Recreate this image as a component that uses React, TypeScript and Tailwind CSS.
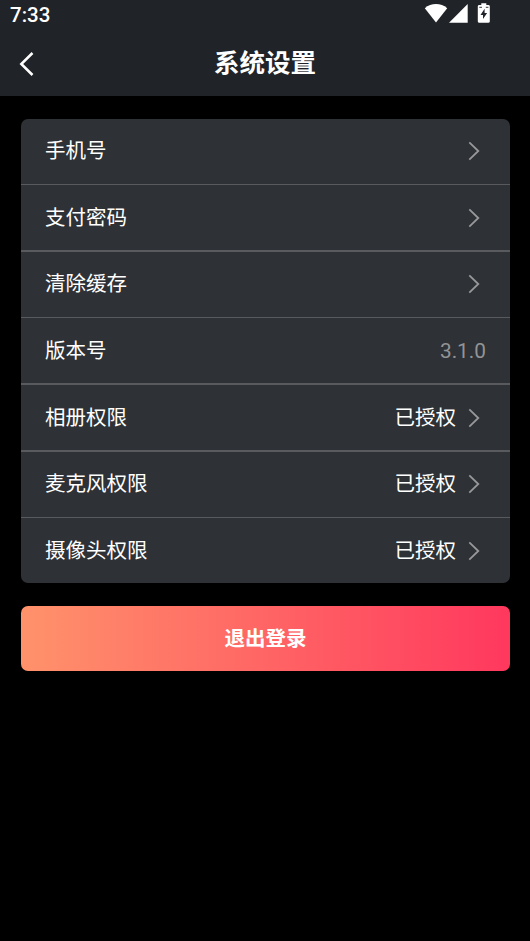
import { FC, Fragment } from "react";

interface SettingItem {
    label: string
    value?: string
    muted?: boolean
    arrow?: boolean
}

const items: SettingItem[] = [
    { label: "手机号", arrow: true },
    { label: "支付密码", arrow: true },
    { label: "清除缓存", arrow: true },
    { label: "版本号", value: "3.1.0", muted: true },
    { label: "相册权限", value: "已授权", arrow: true },
    { label: "麦克风权限", value: "已授权", arrow: true },
    { label: "摄像头权限", value: "已授权", arrow: true },
];

const StatusBar: FC = () => (
    <div className="flex h-7 items-center justify-between pl-2.5 pr-10">
        <span className="pt-0.5 text-[20.5px] leading-7 font-medium">7:33</span>
        <svg width="66" height="28" viewBox="0 0 66 28" fill="white">
            <path d="M0.8 8.3C7 2.7 17 2.7 23.2 8.3L12 22.5Z" />
            <path d="M43.7 4V22.7H25Z" />
            <path
                fillRule="evenodd"
                d="M57.3 3.2H62.3V5H64.2Q65.8 5 65.8 6.3V21.4Q65.8 22.8 64.2 22.8H55.4Q53.8 22.8 53.8 21.4V6.3Q53.8 5 55.4 5H57.3ZM60.6 8.8L56.5 14.9H59V19L63.1 12.9H60.6Z"
            />
            <path d="M55.3 7.3H58M61.8 7.3H64.4" stroke="#202328" strokeWidth="0.9" />
        </svg>
    </div>
)

const Arrow: FC = () => (
    <svg className="ml-3 mr-1.5" width="12" height="20" viewBox="0 0 12 20" fill="none" stroke="#97989a" strokeWidth="1.8">
        <path d="M1.3 1.3L10.3 10L1.3 18.7" />
    </svg>
)

const Row: FC<SettingItem> = ({ label, value, muted, arrow }) => (
    <div className="flex h-[65px] items-center px-6 text-[20.5px] leading-[30px]">
        <span className="flex-1">{label}</span>
        {value && <span className={muted ? "text-[20.8px] text-[#939496]" : ""}>{value}</span>}
        {arrow && <Arrow />}
    </div>
)

const App: FC = () => {
    return (
        <div className="min-h-screen bg-black text-white font-[Roboto,'Noto_Sans_CJK_SC',sans-serif]">
            <header className="h-24 bg-[#202328]">
                <StatusBar />
                <div className="grid h-[68px] grid-cols-[1fr_auto_1fr] items-center">
                    <button type="button" className="ml-[19px] mt-1 w-4">
                        <svg width="16" height="26" viewBox="0 0 16 26" fill="none" stroke="white" strokeWidth="2.5">
                            <path d="M13.5 2L2.3 13L13.5 24" />
                        </svg>
                    </button>
                    <h1 className="pt-0.5 text-[25.5px] leading-9 font-bold">系统设置</h1>
                </div>
            </header>
            <main className="pl-[21px] pr-5 pt-[22.5px]">
                <div className="overflow-hidden rounded-[7px] bg-[#2e3135]">
                    {items.map((item, i) => (
                        <Fragment key={item.label}>
                            {i > 0 && <div className="h-[1.67px] bg-[#585a5d]" />}
                            <Row {...item} />
                        </Fragment>
                    ))}
                </div>
                <button
                    type="button"
                    className="mt-[22.5px] h-[65px] w-full rounded-[7px] bg-linear-to-r/srgb from-[#ff926b] to-[#ff385e] pt-0.5 text-[20.5px] leading-[30px] font-bold">
                    退出登录
                </button>
            </main>
        </div>
    );
};

export default App;
